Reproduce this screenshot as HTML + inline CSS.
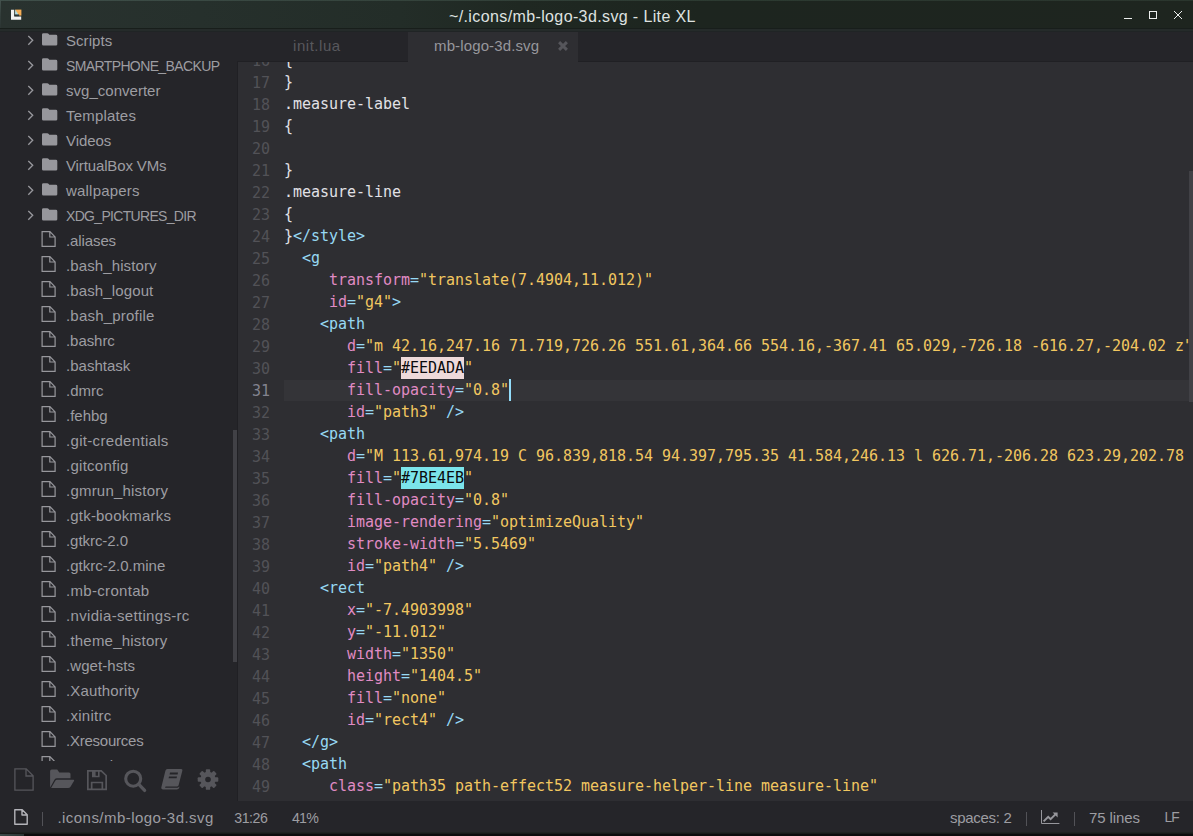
<!DOCTYPE html>
<html lang="en">
<head>
<meta charset="utf-8">
<title>~/.icons/mb-logo-3d.svg - Lite XL</title>
<style>
html,body{margin:0;padding:0;}
body{width:1193px;height:836px;overflow:hidden;background:#252529;position:relative;font-family:"Liberation Sans","DejaVu Sans",sans-serif;color:#97979c;}
svg{display:block;overflow:visible;}
#titlebar{position:absolute;left:0;top:0;width:1193px;height:29px;background:linear-gradient(90deg,#29322f 0px,#26302c 200px,#232d28 400px,#1f2822 520px,#1d251f 700px,#1e251f 1193px);}
#titlebar .topline{position:absolute;left:0;top:0;width:1193px;height:1px;background:linear-gradient(90deg,#3f4f4a,#2c3a31 60%,#2a352d);}
#titlebar .leftline{position:absolute;left:0;top:0;width:1px;height:29px;background:linear-gradient(180deg,#44524e,#333e3b 50%,#2b3432);}
#tbshadow{position:absolute;left:0;top:28px;width:1193px;height:4px;background:linear-gradient(180deg,#181e1b 0,#181e1b 1px,#252b2a 1px,#252b2a 3px,#202425 3px,#202425 4px);}
#titlebar .title{position:absolute;left:449px;top:0;line-height:33px;font-size:16px;letter-spacing:0.38px;color:#dfe2e0;white-space:pre;}
#sidebar{position:absolute;left:0;top:29px;width:237px;height:772px;background:#252529;overflow:hidden;}
#tree{position:absolute;left:0;top:0;width:237px;height:732px;overflow:hidden;}
#rows{position:absolute;left:0;top:-1px;width:237px;}
.row{position:relative;height:25px;white-space:pre;}
.row .lbl{position:absolute;left:66px;top:0;line-height:25px;font-size:15px;color:#9d9da2;}
.row .chev{position:absolute;left:27px;top:6px;width:8px;height:12px;}
.row .fold{position:absolute;left:41.8px;top:4.5px;width:15.3px;height:12.8px;}
.row .file{position:absolute;left:41.4px;top:3.2px;width:15px;height:16px;}
#divider{position:absolute;left:237px;top:61px;width:1px;height:740px;background:#202024;}
#tabs{position:absolute;left:238px;top:29px;width:955px;height:33px;background:#252529;}
#tabs .bline{position:absolute;left:0;top:32px;width:955px;height:1px;background:#202024;}
#tabs .tab{position:absolute;top:1px;height:32px;line-height:32px;font-size:15px;white-space:pre;}
#editor{position:absolute;left:238px;top:62px;width:955px;height:739px;background:#2e2e32;overflow:hidden;}
#code{position:absolute;left:0;top:-13px;width:955px;font-family:"DejaVu Sans Mono","Liberation Mono",monospace;font-size:15px;letter-spacing:-0.03px;}
.ln{position:relative;height:22px;line-height:22px;white-space:pre;}
.ln .no{position:absolute;left:0;top:1px;width:32px;text-align:right;color:#525257;}
.ln .tx{position:absolute;left:46px;top:0;}
.ln.cur .no{color:#83838f;}
.ln.cur::before{content:"";position:absolute;left:46px;top:1px;width:909px;height:21px;background:#343438;}
.n{color:#e1e1e6}.f,.o{color:#97d9f4}.k{color:#e08bc4}.s{color:#f2c760}
.c1,.c2{display:inline-block;height:22px;vertical-align:top;color:#0a0a0c}
.c1{background:#EEDADA}.c2{background:#7BE4EB}
.caret{position:absolute;top:0;width:2px;height:22px;background:#93ddfa;}
#toolbar{position:absolute;left:0;top:732px;width:237px;height:40px;}
#toolbar svg{position:absolute;}
#status{position:absolute;left:0;top:801px;width:1193px;height:33px;background:#252529;font-size:15px;color:#9d9da2;}
#status span{position:absolute;top:0;line-height:34px;white-space:pre;}
#status i{position:absolute;top:11px;width:1px;height:14px;background:#525257;}
#bottom{position:absolute;left:0;top:832px;width:1193px;height:4px;background:linear-gradient(180deg,#1e2221 0,#1e2221 1px,#171a19 1px,#171a19 2px,#0c0c0d 2px,#0c0c0d 4px);}
#bottom i{position:absolute;left:0;top:2px;width:24px;height:2px;background:linear-gradient(90deg,#3b4a49,#2a3534);}
</style>
</head>
<body>
<div id="titlebar"><div class="topline"></div><div class="leftline"></div>
<svg style="position:absolute;left:10px;top:9px" width="12" height="12" viewBox="0 0 12 12"><path d="M1 0.8 H4.2 V7.6 H11.2 V10.8 H1 Z" fill="#f1f1f1"/><rect x="5.2" y="0.6" width="6.2" height="6" fill="#f5ad55"/><path d="M5.2 0.6 L5.2 6.6 L9 6.6 Z" fill="#a9dbe6"/><path d="M4.6 5.4 L9.2 5.4 L9.2 7.2 L4.6 7.2 Z" fill="#17201e" opacity="0.85"/></svg>
<div class="title">~/.icons/mb-logo-3d.svg - Lite XL</div>
<svg style="position:absolute;left:1120px;top:7px" width="68" height="16" viewBox="0 0 68 16" fill="none" stroke="#eceeed" stroke-width="1"><path d="M4 11.5 H12"/><rect x="29.5" y="4.5" width="7" height="7"/><path d="M54 4 L62 12 M62 4 L54 12"/></svg>
</div>
<div id="sidebar">
<div id="tree"><div id="rows">
<div class="row"><svg class="chev" viewBox="0 0 8 12"><path d="M1.3 1.9 L5.7 6.3 L1.3 10.7" fill="none" stroke="#97979c" stroke-width="1.35"/></svg><svg class="fold" viewBox="0 0 16 13"><path d="M1.5 0 H5.6 Q6.3 0 6.8 0.6 L7.6 1.6 H14.5 Q16 1.6 16 3.1 V11.5 Q16 13 14.5 13 H1.5 Q0 13 0 11.5 V1.5 Q0 0 1.5 0 Z" fill="#97979c"/></svg><span class="lbl" style="letter-spacing:0.051px;">Scripts</span></div>
<div class="row"><svg class="chev" viewBox="0 0 8 12"><path d="M1.3 1.9 L5.7 6.3 L1.3 10.7" fill="none" stroke="#97979c" stroke-width="1.35"/></svg><svg class="fold" viewBox="0 0 16 13"><path d="M1.5 0 H5.6 Q6.3 0 6.8 0.6 L7.6 1.6 H14.5 Q16 1.6 16 3.1 V11.5 Q16 13 14.5 13 H1.5 Q0 13 0 11.5 V1.5 Q0 0 1.5 0 Z" fill="#97979c"/></svg><span class="lbl" style="letter-spacing:-0.618px;font-size:14.0px;top:0.7px;">SMARTPHONE_BACKUP</span></div>
<div class="row"><svg class="chev" viewBox="0 0 8 12"><path d="M1.3 1.9 L5.7 6.3 L1.3 10.7" fill="none" stroke="#97979c" stroke-width="1.35"/></svg><svg class="fold" viewBox="0 0 16 13"><path d="M1.5 0 H5.6 Q6.3 0 6.8 0.6 L7.6 1.6 H14.5 Q16 1.6 16 3.1 V11.5 Q16 13 14.5 13 H1.5 Q0 13 0 11.5 V1.5 Q0 0 1.5 0 Z" fill="#97979c"/></svg><span class="lbl" style="letter-spacing:0.022px;">svg_converter</span></div>
<div class="row"><svg class="chev" viewBox="0 0 8 12"><path d="M1.3 1.9 L5.7 6.3 L1.3 10.7" fill="none" stroke="#97979c" stroke-width="1.35"/></svg><svg class="fold" viewBox="0 0 16 13"><path d="M1.5 0 H5.6 Q6.3 0 6.8 0.6 L7.6 1.6 H14.5 Q16 1.6 16 3.1 V11.5 Q16 13 14.5 13 H1.5 Q0 13 0 11.5 V1.5 Q0 0 1.5 0 Z" fill="#97979c"/></svg><span class="lbl" style="letter-spacing:0.191px;">Templates</span></div>
<div class="row"><svg class="chev" viewBox="0 0 8 12"><path d="M1.3 1.9 L5.7 6.3 L1.3 10.7" fill="none" stroke="#97979c" stroke-width="1.35"/></svg><svg class="fold" viewBox="0 0 16 13"><path d="M1.5 0 H5.6 Q6.3 0 6.8 0.6 L7.6 1.6 H14.5 Q16 1.6 16 3.1 V11.5 Q16 13 14.5 13 H1.5 Q0 13 0 11.5 V1.5 Q0 0 1.5 0 Z" fill="#97979c"/></svg><span class="lbl" style="letter-spacing:-0.065px;">Videos</span></div>
<div class="row"><svg class="chev" viewBox="0 0 8 12"><path d="M1.3 1.9 L5.7 6.3 L1.3 10.7" fill="none" stroke="#97979c" stroke-width="1.35"/></svg><svg class="fold" viewBox="0 0 16 13"><path d="M1.5 0 H5.6 Q6.3 0 6.8 0.6 L7.6 1.6 H14.5 Q16 1.6 16 3.1 V11.5 Q16 13 14.5 13 H1.5 Q0 13 0 11.5 V1.5 Q0 0 1.5 0 Z" fill="#97979c"/></svg><span class="lbl" style="letter-spacing:-0.126px;">VirtualBox VMs</span></div>
<div class="row"><svg class="chev" viewBox="0 0 8 12"><path d="M1.3 1.9 L5.7 6.3 L1.3 10.7" fill="none" stroke="#97979c" stroke-width="1.35"/></svg><svg class="fold" viewBox="0 0 16 13"><path d="M1.5 0 H5.6 Q6.3 0 6.8 0.6 L7.6 1.6 H14.5 Q16 1.6 16 3.1 V11.5 Q16 13 14.5 13 H1.5 Q0 13 0 11.5 V1.5 Q0 0 1.5 0 Z" fill="#97979c"/></svg><span class="lbl" style="letter-spacing:0.198px;">wallpapers</span></div>
<div class="row"><svg class="chev" viewBox="0 0 8 12"><path d="M1.3 1.9 L5.7 6.3 L1.3 10.7" fill="none" stroke="#97979c" stroke-width="1.35"/></svg><svg class="fold" viewBox="0 0 16 13"><path d="M1.5 0 H5.6 Q6.3 0 6.8 0.6 L7.6 1.6 H14.5 Q16 1.6 16 3.1 V11.5 Q16 13 14.5 13 H1.5 Q0 13 0 11.5 V1.5 Q0 0 1.5 0 Z" fill="#97979c"/></svg><span class="lbl" style="letter-spacing:-0.683px;font-size:14.0px;top:0.7px;">XDG_PICTURES_DIR</span></div>
<div class="row"><svg class="file" viewBox="0 0 15 16"><path d="M1.1 0.7 H8.9 L14.1 5.9 V15.3 H1.1 Z M8.8 0.7 V6 H14.1" fill="none" stroke="#97979c" stroke-width="1.2" stroke-linejoin="miter"/></svg><span class="lbl" style="letter-spacing:-0.107px;">.aliases</span></div>
<div class="row"><svg class="file" viewBox="0 0 15 16"><path d="M1.1 0.7 H8.9 L14.1 5.9 V15.3 H1.1 Z M8.8 0.7 V6 H14.1" fill="none" stroke="#97979c" stroke-width="1.2" stroke-linejoin="miter"/></svg><span class="lbl" style="letter-spacing:0.114px;">.bash_history</span></div>
<div class="row"><svg class="file" viewBox="0 0 15 16"><path d="M1.1 0.7 H8.9 L14.1 5.9 V15.3 H1.1 Z M8.8 0.7 V6 H14.1" fill="none" stroke="#97979c" stroke-width="1.2" stroke-linejoin="miter"/></svg><span class="lbl" style="letter-spacing:0.124px;">.bash_logout</span></div>
<div class="row"><svg class="file" viewBox="0 0 15 16"><path d="M1.1 0.7 H8.9 L14.1 5.9 V15.3 H1.1 Z M8.8 0.7 V6 H14.1" fill="none" stroke="#97979c" stroke-width="1.2" stroke-linejoin="miter"/></svg><span class="lbl" style="letter-spacing:0.207px;">.bash_profile</span></div>
<div class="row"><svg class="file" viewBox="0 0 15 16"><path d="M1.1 0.7 H8.9 L14.1 5.9 V15.3 H1.1 Z M8.8 0.7 V6 H14.1" fill="none" stroke="#97979c" stroke-width="1.2" stroke-linejoin="miter"/></svg><span class="lbl" style="letter-spacing:-0.057px;">.bashrc</span></div>
<div class="row"><svg class="file" viewBox="0 0 15 16"><path d="M1.1 0.7 H8.9 L14.1 5.9 V15.3 H1.1 Z M8.8 0.7 V6 H14.1" fill="none" stroke="#97979c" stroke-width="1.2" stroke-linejoin="miter"/></svg><span class="lbl" style="letter-spacing:0.020px;">.bashtask</span></div>
<div class="row"><svg class="file" viewBox="0 0 15 16"><path d="M1.1 0.7 H8.9 L14.1 5.9 V15.3 H1.1 Z M8.8 0.7 V6 H14.1" fill="none" stroke="#97979c" stroke-width="1.2" stroke-linejoin="miter"/></svg><span class="lbl" style="letter-spacing:0.020px;">.dmrc</span></div>
<div class="row"><svg class="file" viewBox="0 0 15 16"><path d="M1.1 0.7 H8.9 L14.1 5.9 V15.3 H1.1 Z M8.8 0.7 V6 H14.1" fill="none" stroke="#97979c" stroke-width="1.2" stroke-linejoin="miter"/></svg><span class="lbl" style="letter-spacing:-0.003px;">.fehbg</span></div>
<div class="row"><svg class="file" viewBox="0 0 15 16"><path d="M1.1 0.7 H8.9 L14.1 5.9 V15.3 H1.1 Z M8.8 0.7 V6 H14.1" fill="none" stroke="#97979c" stroke-width="1.2" stroke-linejoin="miter"/></svg><span class="lbl" style="letter-spacing:0.322px;">.git-credentials</span></div>
<div class="row"><svg class="file" viewBox="0 0 15 16"><path d="M1.1 0.7 H8.9 L14.1 5.9 V15.3 H1.1 Z M8.8 0.7 V6 H14.1" fill="none" stroke="#97979c" stroke-width="1.2" stroke-linejoin="miter"/></svg><span class="lbl" style="letter-spacing:0.265px;">.gitconfig</span></div>
<div class="row"><svg class="file" viewBox="0 0 15 16"><path d="M1.1 0.7 H8.9 L14.1 5.9 V15.3 H1.1 Z M8.8 0.7 V6 H14.1" fill="none" stroke="#97979c" stroke-width="1.2" stroke-linejoin="miter"/></svg><span class="lbl" style="letter-spacing:0.213px;">.gmrun_history</span></div>
<div class="row"><svg class="file" viewBox="0 0 15 16"><path d="M1.1 0.7 H8.9 L14.1 5.9 V15.3 H1.1 Z M8.8 0.7 V6 H14.1" fill="none" stroke="#97979c" stroke-width="1.2" stroke-linejoin="miter"/></svg><span class="lbl" style="letter-spacing:0.182px;">.gtk-bookmarks</span></div>
<div class="row"><svg class="file" viewBox="0 0 15 16"><path d="M1.1 0.7 H8.9 L14.1 5.9 V15.3 H1.1 Z M8.8 0.7 V6 H14.1" fill="none" stroke="#97979c" stroke-width="1.2" stroke-linejoin="miter"/></svg><span class="lbl" style="letter-spacing:-0.053px;">.gtkrc-2.0</span></div>
<div class="row"><svg class="file" viewBox="0 0 15 16"><path d="M1.1 0.7 H8.9 L14.1 5.9 V15.3 H1.1 Z M8.8 0.7 V6 H14.1" fill="none" stroke="#97979c" stroke-width="1.2" stroke-linejoin="miter"/></svg><span class="lbl" style="letter-spacing:0.007px;">.gtkrc-2.0.mine</span></div>
<div class="row"><svg class="file" viewBox="0 0 15 16"><path d="M1.1 0.7 H8.9 L14.1 5.9 V15.3 H1.1 Z M8.8 0.7 V6 H14.1" fill="none" stroke="#97979c" stroke-width="1.2" stroke-linejoin="miter"/></svg><span class="lbl" style="letter-spacing:0.314px;">.mb-crontab</span></div>
<div class="row"><svg class="file" viewBox="0 0 15 16"><path d="M1.1 0.7 H8.9 L14.1 5.9 V15.3 H1.1 Z M8.8 0.7 V6 H14.1" fill="none" stroke="#97979c" stroke-width="1.2" stroke-linejoin="miter"/></svg><span class="lbl" style="letter-spacing:0.324px;">.nvidia-settings-rc</span></div>
<div class="row"><svg class="file" viewBox="0 0 15 16"><path d="M1.1 0.7 H8.9 L14.1 5.9 V15.3 H1.1 Z M8.8 0.7 V6 H14.1" fill="none" stroke="#97979c" stroke-width="1.2" stroke-linejoin="miter"/></svg><span class="lbl" style="letter-spacing:0.222px;">.theme_history</span></div>
<div class="row"><svg class="file" viewBox="0 0 15 16"><path d="M1.1 0.7 H8.9 L14.1 5.9 V15.3 H1.1 Z M8.8 0.7 V6 H14.1" fill="none" stroke="#97979c" stroke-width="1.2" stroke-linejoin="miter"/></svg><span class="lbl" style="letter-spacing:0.084px;">.wget-hsts</span></div>
<div class="row"><svg class="file" viewBox="0 0 15 16"><path d="M1.1 0.7 H8.9 L14.1 5.9 V15.3 H1.1 Z M8.8 0.7 V6 H14.1" fill="none" stroke="#97979c" stroke-width="1.2" stroke-linejoin="miter"/></svg><span class="lbl" style="letter-spacing:0.162px;">.Xauthority</span></div>
<div class="row"><svg class="file" viewBox="0 0 15 16"><path d="M1.1 0.7 H8.9 L14.1 5.9 V15.3 H1.1 Z M8.8 0.7 V6 H14.1" fill="none" stroke="#97979c" stroke-width="1.2" stroke-linejoin="miter"/></svg><span class="lbl" style="letter-spacing:0.270px;">.xinitrc</span></div>
<div class="row"><svg class="file" viewBox="0 0 15 16"><path d="M1.1 0.7 H8.9 L14.1 5.9 V15.3 H1.1 Z M8.8 0.7 V6 H14.1" fill="none" stroke="#97979c" stroke-width="1.2" stroke-linejoin="miter"/></svg><span class="lbl" style="letter-spacing:-0.232px;">.Xresources</span></div>
<div class="row"><svg class="file" viewBox="0 0 15 16"><path d="M1.1 0.7 H8.9 L14.1 5.9 V15.3 H1.1 Z M8.8 0.7 V6 H14.1" fill="none" stroke="#97979c" stroke-width="1.2" stroke-linejoin="miter"/></svg><span class="lbl" style="letter-spacing:0.188px;">.xsession-errors</span></div>
</div></div>
<div style="position:absolute;left:233px;top:401px;width:4px;height:232px;background:#414146;"></div>
<div id="toolbar">
<svg style="left:14px;top:7px" width="20" height="23" viewBox="0 0 20 23"><path d="M0.9 0.9 H12.2 L19.1 7.8 V22.1 H0.9 Z M12 0.9 V8 H19.1" fill="none" stroke="#56565b" stroke-width="1.3" stroke-linejoin="miter"/></svg>
<svg style="left:50px;top:8px" width="25" height="20" viewBox="0 0 25 20"><path d="M0.1 2.2 Q0.1 0.6 1.7 0.6 H7.2 L9.3 3.4 H19 Q20.5 3.4 20.5 4.9 V9.2 H7 Q5.4 9.2 4.6 10.6 L0.1 18.4 Z" fill="#56565b"/><path d="M6.8 10.8 H23.4 Q24.6 10.8 24 11.9 L20.3 18 Q19.6 19.1 18.2 19.1 H1.1 L5.3 11.8 Q5.9 10.8 6.8 10.8 Z" fill="#56565b"/></svg>
<svg style="left:87px;top:8.5px" width="20" height="20.2" viewBox="0 0 20 21" preserveAspectRatio="none"><path fill-rule="evenodd" d="M0 0 H14.6 L20 5.4 V21 H0 Z M1.7 1.7 V19.3 H3.8 V12.2 H16.2 V19.3 H18.3 V6.1 L13.9 1.7 H12.6 V7.6 H5 V1.7 Z M8.6 1.7 V6 H11 V1.7 Z M5.5 13.9 V19.3 H14.5 V13.9 Z" fill="#56565b"/></svg>
<svg style="left:124px;top:8px" width="22" height="23" viewBox="0 0 22 23"><circle cx="9.2" cy="9.7" r="7.5" fill="none" stroke="#56565b" stroke-width="3.1"/><path d="M14.6 15.2 L20.6 21.4" stroke="#56565b" stroke-width="3.3" stroke-linecap="round"/></svg>
<svg style="left:161px;top:8px" width="22" height="21" viewBox="0 0 22 21"><path fill-rule="evenodd" d="M6.4 0 H20.2 Q21.8 0 21.4 1.6 L17.6 16.2 Q17.2 17.6 15.8 17.6 H4.6 L4 18.8 H16.4 Q17.4 18.8 17.8 17.8 L18.6 17.8 Q18 20.4 16 20.4 H2.2 Q-0.2 20.4 0.4 18 L4.4 1.8 Q4.8 0 6.4 0 Z M9 3.6 L8.6 5.4 H16.6 L17 3.6 Z M8 7.4 L7.6 9.2 H15.6 L16 7.4 Z" fill="#56565b"/></svg>
<svg style="left:198px;top:8.3px" width="20" height="21" viewBox="-10 -10.5 20 21"><g fill="#56565b"><circle r="7.7"/><g id="t"><rect x="-2.2" y="-10.3" width="4.4" height="5" rx="0.9"/></g><use href="#t" transform="rotate(45)"/><use href="#t" transform="rotate(90)"/><use href="#t" transform="rotate(135)"/><use href="#t" transform="rotate(180)"/><use href="#t" transform="rotate(225)"/><use href="#t" transform="rotate(270)"/><use href="#t" transform="rotate(315)"/></g><circle r="2.8" fill="#252529"/></svg>
</div>
</div>
<div id="divider"></div>

<div id="tabs"><div class="bline"></div>
<div class="tab" style="left:55px;color:#58585d;letter-spacing:0.55px;">init.lua</div>
<div class="tab" style="left:170px;width:170px;background:#2e2e32;"><span style="position:absolute;left:26px;color:#97979c;letter-spacing:0.13px;">mb-logo-3d.svg</span>
<svg style="position:absolute;left:150px;top:11px" width="10" height="10" viewBox="0 0 10 10"><path d="M1.1 1.1 L8.9 8.9 M8.9 1.1 L1.1 8.9" stroke="#56565b" stroke-width="2.9" stroke-linecap="butt"/></svg></div>
</div>
<div id="tbshadow"></div>
<div id="editor">
<div id="code">
<div class="ln"><span class="no">16</span><span class="tx"><span class="n">{</span></span></div>
<div class="ln"><span class="no">17</span><span class="tx"><span class="n">}</span></span></div>
<div class="ln"><span class="no">18</span><span class="tx"><span class="n">.measure-label</span></span></div>
<div class="ln"><span class="no">19</span><span class="tx"><span class="n">{</span></span></div>
<div class="ln"><span class="no">20</span><span class="tx"></span></div>
<div class="ln"><span class="no">21</span><span class="tx"><span class="n">}</span></span></div>
<div class="ln"><span class="no">22</span><span class="tx"><span class="n">.measure-line</span></span></div>
<div class="ln"><span class="no">23</span><span class="tx"><span class="n">{</span></span></div>
<div class="ln"><span class="no">24</span><span class="tx"><span class="n">}</span><span class="f">&lt;/style&gt;</span></span></div>
<div class="ln"><span class="no">25</span><span class="tx"><span class="n">  </span><span class="f">&lt;g</span></span></div>
<div class="ln"><span class="no">26</span><span class="tx"><span class="n">     </span><span class="k">transform</span><span class="o">=</span><span class="s">"translate(7.4904,11.012)"</span></span></div>
<div class="ln"><span class="no">27</span><span class="tx"><span class="n">     </span><span class="k">id</span><span class="o">=</span><span class="s">"g4"</span><span class="f">&gt;</span></span></div>
<div class="ln"><span class="no">28</span><span class="tx"><span class="n">    </span><span class="f">&lt;path</span></span></div>
<div class="ln"><span class="no">29</span><span class="tx"><span class="n">       </span><span class="k">d</span><span class="o">=</span><span class="s">"m 42.16,247.16 71.719,726.26 551.61,364.66 554.16,-367.41 65.029,-726.18 -616.27,-204.02 z"</span></span></div>
<div class="ln"><span class="no">30</span><span class="tx"><span class="n">       </span><span class="k">fill</span><span class="o">=</span><span class="s">"</span><span class="c1">#EEDADA</span><span class="s">"</span></span></div>
<div class="ln cur"><span class="no">31</span><span class="tx"><span class="n">       </span><span class="k">fill-opacity</span><span class="o">=</span><span class="s">"0.8"</span><span class="caret"></span></span></div>
<div class="ln"><span class="no">32</span><span class="tx"><span class="n">       </span><span class="k">id</span><span class="o">=</span><span class="s">"path3"</span><span class="n"> </span><span class="f">/&gt;</span></span></div>
<div class="ln"><span class="no">33</span><span class="tx"><span class="n">    </span><span class="f">&lt;path</span></span></div>
<div class="ln"><span class="no">34</span><span class="tx"><span class="n">       </span><span class="k">d</span><span class="o">=</span><span class="s">"M 113.61,974.19 C 96.839,818.54 94.397,795.35 41.584,246.13 l 626.71,-206.28 623.29,202.78 c -10.73,129.9 -20.1,260.1"</span></span></div>
<div class="ln"><span class="no">35</span><span class="tx"><span class="n">       </span><span class="k">fill</span><span class="o">=</span><span class="s">"</span><span class="c2">#7BE4EB</span><span class="s">"</span></span></div>
<div class="ln"><span class="no">36</span><span class="tx"><span class="n">       </span><span class="k">fill-opacity</span><span class="o">=</span><span class="s">"0.8"</span></span></div>
<div class="ln"><span class="no">37</span><span class="tx"><span class="n">       </span><span class="k">image-rendering</span><span class="o">=</span><span class="s">"optimizeQuality"</span></span></div>
<div class="ln"><span class="no">38</span><span class="tx"><span class="n">       </span><span class="k">stroke-width</span><span class="o">=</span><span class="s">"5.5469"</span></span></div>
<div class="ln"><span class="no">39</span><span class="tx"><span class="n">       </span><span class="k">id</span><span class="o">=</span><span class="s">"path4"</span><span class="n"> </span><span class="f">/&gt;</span></span></div>
<div class="ln"><span class="no">40</span><span class="tx"><span class="n">    </span><span class="f">&lt;rect</span></span></div>
<div class="ln"><span class="no">41</span><span class="tx"><span class="n">       </span><span class="k">x</span><span class="o">=</span><span class="s">"-7.4903998"</span></span></div>
<div class="ln"><span class="no">42</span><span class="tx"><span class="n">       </span><span class="k">y</span><span class="o">=</span><span class="s">"-11.012"</span></span></div>
<div class="ln"><span class="no">43</span><span class="tx"><span class="n">       </span><span class="k">width</span><span class="o">=</span><span class="s">"1350"</span></span></div>
<div class="ln"><span class="no">44</span><span class="tx"><span class="n">       </span><span class="k">height</span><span class="o">=</span><span class="s">"1404.5"</span></span></div>
<div class="ln"><span class="no">45</span><span class="tx"><span class="n">       </span><span class="k">fill</span><span class="o">=</span><span class="s">"none"</span></span></div>
<div class="ln"><span class="no">46</span><span class="tx"><span class="n">       </span><span class="k">id</span><span class="o">=</span><span class="s">"rect4"</span><span class="n"> </span><span class="f">/&gt;</span></span></div>
<div class="ln"><span class="no">47</span><span class="tx"><span class="n">  </span><span class="f">&lt;/g&gt;</span></span></div>
<div class="ln"><span class="no">48</span><span class="tx"><span class="n">  </span><span class="f">&lt;path</span></span></div>
<div class="ln"><span class="no">49</span><span class="tx"><span class="n">     </span><span class="k">class</span><span class="o">=</span><span class="s">"path35 path-effect52 measure-helper-line measure-line"</span></span></div>
</div>
<div style="position:absolute;left:951px;top:109px;width:4px;height:231px;background:#414146;"></div>
</div>
<div id="status">
<svg style="position:absolute;left:14px;top:8px" width="14" height="16" viewBox="0 0 14 16"><path d="M0.8 0.8 H8.2 L13.2 5.8 V15.2 H0.8 Z M8 0.8 V6 H13.2" fill="none" stroke="#b4b4b9" stroke-width="1.4" stroke-linejoin="round"/></svg>
<i style="left:42px"></i>
<span style="left:57.4px;letter-spacing:0.46px;">.icons/mb-logo-3d.svg</span>
<span style="left:234.3px;font-size:14.2px;letter-spacing:-0.5px;">31:26</span>
<span style="left:292px;font-size:14.2px;letter-spacing:-0.8px;">41%</span>
<span style="left:950px;letter-spacing:-0.3px;">spaces: 2</span>
<i style="left:1026px"></i>
<svg style="position:absolute;left:1040px;top:9px" width="20" height="15" viewBox="0 0 20 15"><path d="M1.5 0 V13.5 H19.4" fill="none" stroke="#97979c" stroke-width="1"/><path d="M3.6 11.4 L8.2 6.8 L10.6 9.2 L15.4 4.4" fill="none" stroke="#97979c" stroke-width="2"/><path d="M12.6 2.4 H17.6 V7.4 Z" fill="#97979c"/></svg>
<i style="left:1074px"></i>
<span style="left:1089px;letter-spacing:-0.1px;">75 lines</span>
<span style="left:1164.5px;font-size:13.8px;letter-spacing:-1px;">LF</span>
</div>
<div id="bottom"><i></i></div>
</body>
</html>
